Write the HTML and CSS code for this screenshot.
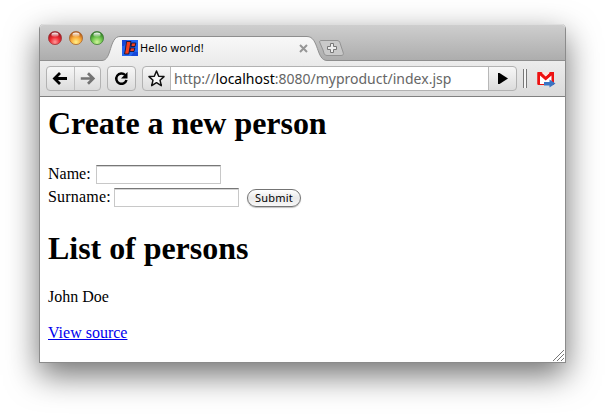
FILE: index.html
```html
<!DOCTYPE html>
<html lang="en">
<head>
<meta charset="utf-8">
<title>Hello world!</title>
<link rel="stylesheet" href="styles.css">
</head>
<body>
<div class="window">
  <header class="tabstrip">
    <svg class="tabshape" width="525" height="37" viewBox="0 0 525 37">
      <defs>
        <linearGradient id="tab" x1="0" y1="0" x2="0" y2="1"><stop offset="0" stop-color="#f8f8f8"/><stop offset="1" stop-color="#ececec"/></linearGradient>
        <radialGradient id="red" cx=".5" cy=".8" r=".75"><stop offset="0" stop-color="#ff9a9a"/><stop offset=".5" stop-color="#ee2932"/><stop offset="1" stop-color="#8d1219"/></radialGradient>
        <radialGradient id="amber" cx=".5" cy=".8" r=".75"><stop offset="0" stop-color="#fff08a"/><stop offset=".5" stop-color="#fbad3b"/><stop offset="1" stop-color="#a94b10"/></radialGradient>
        <radialGradient id="green" cx=".5" cy=".8" r=".75"><stop offset="0" stop-color="#d2f49c"/><stop offset=".5" stop-color="#70c74e"/><stop offset="1" stop-color="#25711d"/></radialGradient>
        <linearGradient id="shine" x1="0" y1="0" x2="0" y2="1"><stop offset="0" stop-color="#fff"/><stop offset="1" stop-color="#fff" stop-opacity=".1"/></linearGradient>
      </defs>
      <path d="M0 36.500H62C72 36.500 69 12.500 80 12.500H267C279 12.500 276 36.500 287 36.500H525V38H0Z" fill="url(#tab)"/>
      <path d="M0 36.500H62C72 36.500 69 12.500 80 12.500H267C279 12.500 276 36.500 287 36.500H525" fill="none" stroke="#8e8e8e"/>
      <path d="M282 17.500H298C301 17.500 301 20 302 23L304 29C305 31.500 304 32.500 302 32.500H288C285 32.500 285 30 284 27L281 20C280 18.500 281 17.500 282 17.500Z" transform="translate(-1 -1)" fill="#c9c9c9" stroke="#939393"/>
      <path d="M290.500 20.500H293.500V23.500H296.500V26.500H293.500V29.500H290.500V26.500H287.500V23.500H290.500Z" transform="translate(0 -1)" fill="#eee" stroke="#777"/>
      <g stroke-width=".8">
        <circle cx="15" cy="14" r="6.600" fill="url(#red)" stroke="#9d3d40"/>
        <circle cx="36" cy="14" r="6.600" fill="url(#amber)" stroke="#a66a35"/>
        <circle cx="57" cy="14" r="6.600" fill="url(#green)" stroke="#467f3d"/>
      </g>
      <g fill="url(#shine)"><ellipse cx="15" cy="10.800" rx="3.600" ry="2.200"/><ellipse cx="36" cy="10.800" rx="3.600" ry="2.200"/><ellipse cx="57" cy="10.800" rx="3.600" ry="2.200"/></g>
    </svg>
    <div class="tab">
      <svg width="16" height="16" viewBox="0 0 16 16"><path fill="#2366f0" d="M0 0H16V16H0Z"/><path d="M0 0H5L2 6H0ZM12 12H16V16H9Z" fill="#1647d8"/><path d="M4.500 1.500H9L6.800 14H2.500L3.500 9ZM9.500 3H13.800L13 6.500H9ZM8.500 8H12.800L12 11.500H7.800Z" fill="#f4401d" stroke="#14133c" stroke-width=".9"/></svg>
      <span class="title">Hello world!</span>
      <svg class="close" width="9" height="9" viewBox="0 0 9 9"><path d="M1 1L8 8M8 1L1 8" stroke="#969696" stroke-width="2"/></svg>
    </div>
  </header>
  <nav class="toolbar">
    <div class="btn pair">
      <svg width="27" height="23" viewBox="0 0 27 23"><path d="M20 11.500H8M13 6L7.500 11.500L13 17" fill="none" stroke="#000" stroke-width="2.800"/></svg>
      <svg class="forward" width="27" height="23" viewBox="0 0 27 23"><path d="M6 11.500H18M13.500 6L19 11.500L13.500 17" fill="none" stroke="#737373" stroke-width="2.800"/></svg>
    </div>
    <div class="btn reload"><svg width="27" height="23" viewBox="0 0 27 23"><path d="M17.200 8A5.200 5.200 0 1 0 18.500 13" fill="none" stroke="#000" stroke-width="2.500"/><path d="M19.500 5V11.500H13Z"/></svg></div>
    <div class="btn omnibox">
      <svg width="27" height="23" viewBox="0 0 27 23"><path d="M13.500 4L15.700 9.200L21 9.600L17 13.200L18.300 18.700L13.500 15.700L8.700 18.700L10 13.200L6 9.600L11.300 9.200Z" fill="#fafafa" stroke="#111" stroke-width="1.500" stroke-linejoin="round"/></svg>
      <div class="url">http://<b>localhost</b>:8080/myproduct/index.jsp</div>
      <svg width="27" height="23" viewBox="0 0 27 23"><path d="M9 6H10.500L19 11.500L10.500 17H9Z"/></svg>
    </div>
    <span class="divider"></span>
    <svg class="mail" width="19" height="18" viewBox="0 0 19 18"><path d="M1 2.500H16.500V14.500H1Z" fill="#fff" stroke="#ed1111"/><path d="M.5 2H4L8.700 6.500L13.500 2H17V14.500H14.500V5.500L8.700 10.500L3 5.500V14.500H.5Z" fill="#ed1111"/><path d="M4.500 2H13L8.700 6Z" fill="#f8e4e0"/><path d="M7 12H12.500V9.500L18.500 13.500L12.500 17.500V15.500H7Z" fill="#3a74c4"/></svg>
  </nav>
  <main class="page">
    <h1>Create a new person</h1>
    <form>
      <div class="row"><label for="name">Name:</label><input id="name"></div>
      <div class="row"><label class="wide" for="surname">Surname:</label><input id="surname"><button type="button">Submit</button></div>
    </form>
    <h1>List of persons</h1>
    <p>John Doe</p>
    <p><a href="#">View source</a></p>
    <svg class="grip" width="12" height="12" viewBox="0 0 12 12"><path d="M1 12L12 1M5 12L12 5M9 12L12 9" stroke="#777"/></svg>
  </main>
</div>
</body>
</html>
```
FILE: styles.css
```css
* { box-sizing: border-box; }
body { margin: 0; padding: 24px 39px 0; height: 417px; overflow: hidden; background: #fff; }
svg { display: block; flex: none; }
.window {
  width: 527px; height: 339px; display: flex; flex-direction: column;
  border: 1px solid #8b8b8b; border-top: 0; border-radius: 5px 5px 0 0;
  box-shadow: 0 12px 32px rgba(0,0,0,.56);
}
.tabstrip {
  position: relative; height: 37px; flex: none; border-radius: 4px 4px 0 0; overflow: hidden;
  background: linear-gradient(#cfcfcf, #acacac); box-shadow: inset 0 1px #dedede;
}
.tabshape { position: absolute; left: 0; top: 0; }
.tab { position: relative; display: flex; align-items: center; width: 186px; height: 16px; margin: 16px 0 0 82px; }
.title { margin-left: 2px; font: 11px/16px "Noto Sans", sans-serif; letter-spacing: .16px; color: #000; white-space: nowrap; }
.close { margin-left: auto; }
.toolbar {
  height: 36px; flex: none; display: flex; align-items: center; padding: 0 9px 0 6px;
  background: linear-gradient(#ececec, #dadada); border-bottom: 1px solid #808080;
}
.btn { display: flex; height: 25px; border: 1px solid #b2b2b2; border-radius: 4px; background: linear-gradient(#f7f7f7, #dcdcdc); }
.pair { width: 55px; }
.forward { border-left: 1px solid #c0c0c0; }
.reload { width: 29px; margin-left: 6px; }
.omnibox { width: 375px; margin-left: 6px; }
.url {
  flex: 1; padding-left: 3px; background: #fff; border-left: 1px solid #b8b8b8; border-right: 1px solid #b8b8b8;
  font: 14px/23px "Noto Sans", sans-serif; color: #666; white-space: nowrap;
}
.url b { font-weight: 400; color: #000; }
.divider { width: 4px; height: 19px; margin-left: 6px; border: solid #777; border-width: 0 1px; background: #f5f5f5; }
.mail { margin-left: 10px; }
.page { position: relative; flex: 1; padding: 8px 8px 0; background: #fff; font: 16px/18px "Liberation Serif", serif; color: #000; }
h1 { margin: 0; font-size: 32px; line-height: 37px; letter-spacing: -.04px; }
form { margin: 20px 0 21px; }
.row { display: flex; align-items: center; height: 24px; }
.row + .row { height: 23px; }
label { width: 43px; white-space: nowrap; }
.wide { width: 61px; padding-bottom: 2px; letter-spacing: .2px; }
input {
  width: 125px; height: 19px; margin: 0 0 0 5px; padding: 1px 3px; outline: 0;
  border: 1px solid #c8c8c8; border-top-color: #777; background: #fff; box-shadow: inset 0 1px #d4d4d4;
}
button {
  width: 54px; height: 18px; margin-left: 8px; padding: 0; border: 1px solid #747474; border-radius: 9px;
  background: linear-gradient(#fff, #e9e9e9 50%, #f8f8f8); box-shadow: 0 1px 1px rgba(0,0,0,.25);
  font: 11px/15px "Noto Sans", sans-serif; letter-spacing: .2px; color: #000;
}
p { margin: 0 0 18px; }
h1 + p { margin-top: 21px; }
a { color: #0000ee; }
.grip { position: absolute; right: 1px; bottom: 1px; }
```
